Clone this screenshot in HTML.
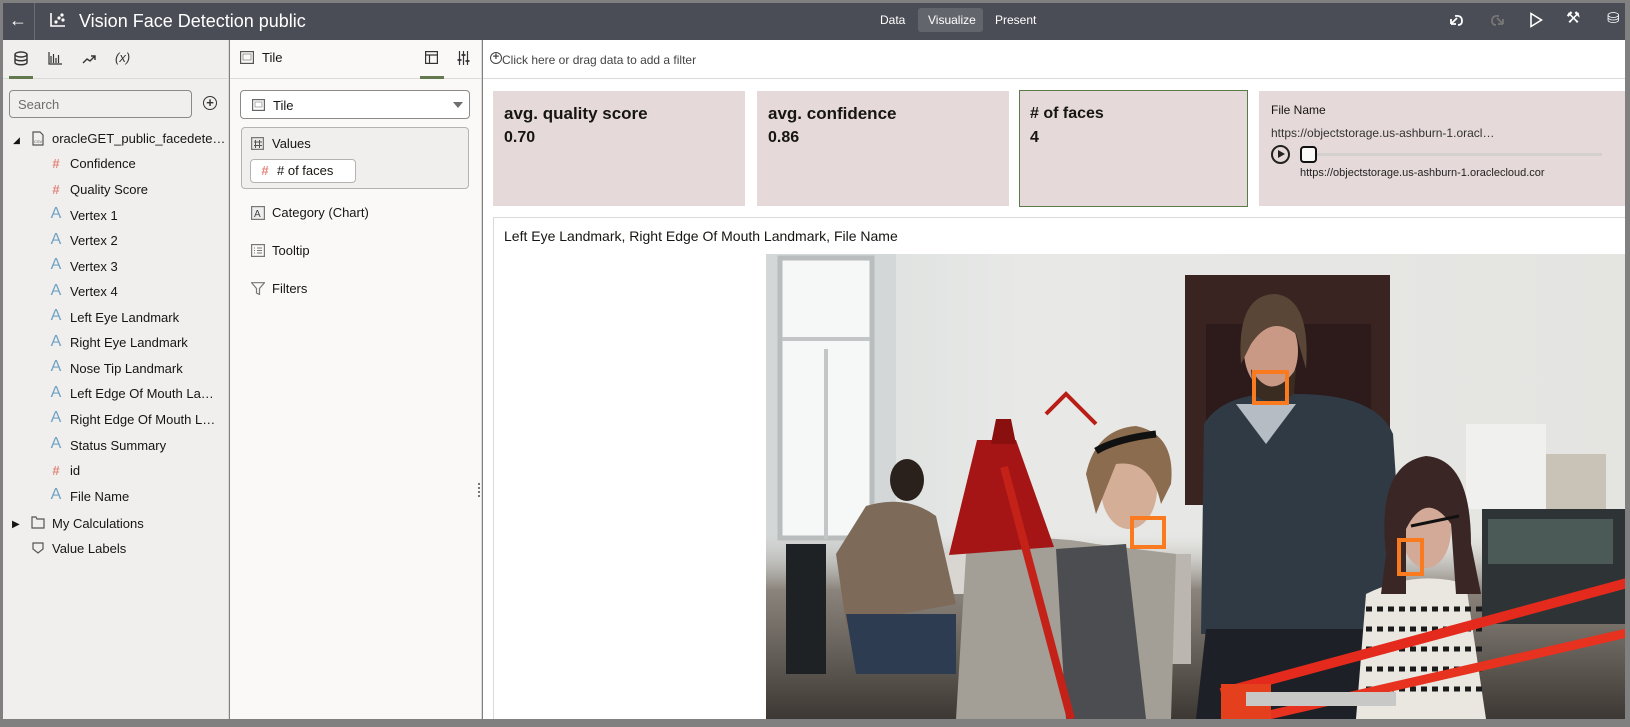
<!DOCTYPE html>
<html><head><meta charset="utf-8"><style>
*{box-sizing:border-box;margin:0;padding:0}
body{width:1630px;height:727px;overflow:hidden;background:#808080;font-family:"Liberation Sans",sans-serif;color:#161513;position:relative}
.a{position:absolute}
.t{position:absolute;white-space:nowrap;font-size:13px;line-height:16px}
.top{left:3px;top:3px;width:1622px;height:37px;background:#4a4d55}
.ic{position:absolute;font-size:13px;font-weight:bold;line-height:14px;width:14px;text-align:center}
.h{color:#e0877c}.A{color:#6fa2c4;font-weight:normal;font-size:16px}
</style></head><body>
<div class="a top"></div>
<div class="a" style="left:34px;top:3px;width:1px;height:37px;background:#6a6d74"></div>
<div class="t" style="left:9px;top:12px;color:#fff;font-size:18px">&#8592;</div>
<svg class="a" style="left:50px;top:12px" width="16" height="15" viewBox="0 0 16 15"><path d="M1 1v13h14" stroke="#fff" stroke-width="1.6" fill="none"/><circle cx="6" cy="10" r="1.6" fill="#fff"/><circle cx="9" cy="6" r="1.6" fill="#fff"/><circle cx="13" cy="8" r="1.6" fill="#fff"/><circle cx="12" cy="3" r="1.6" fill="#fff"/></svg>
<div class="t" style="left:79px;top:10px;color:#fff;font-size:18px;line-height:22px">Vision Face Detection public</div>
<div class="t" style="left:880px;top:12px;color:#fff;font-size:12px">Data</div>
<div class="a" style="left:918px;top:8px;width:65px;height:24px;background:#62656c;border-radius:3px"></div>
<div class="t" style="left:928px;top:12px;color:#fff;font-size:12px">Visualize</div>
<div class="t" style="left:995px;top:12px;color:#fff;font-size:12px">Present</div>
<svg class="a" style="left:1448px;top:13px" width="16" height="14"><path d="M3 11 L9 5 M3 11V6 M3 11H8" stroke="#fff" stroke-width="1.8" fill="none"/><path d="M7 3 Q14 2 14 8 Q14 12 10 12" stroke="#fff" stroke-width="1.8" fill="none"/></svg>
<svg class="a" style="left:1490px;top:13px" width="16" height="14"><path d="M13 11 L7 5 M13 11V6 M13 11H8" stroke="#777" stroke-width="1.8" fill="none"/><path d="M9 3 Q2 2 2 8 Q2 12 6 12" stroke="#777" stroke-width="1.8" fill="none"/></svg>
<svg class="a" style="left:1529px;top:12px" width="14" height="16"><path d="M2 1.5L12.5 8 2 14.5z" stroke="#fff" stroke-width="1.6" fill="none"/></svg>
<div class="t" style="left:1566px;top:11px;color:#fff;font-size:16px">&#9874;</div>
<div class="t" style="left:1607px;top:11px;color:#fff;font-size:15px">&#9921;</div>

<!-- left panel -->
<div class="a" style="left:3px;top:40px;width:226px;height:679px;background:#f1efed;border-right:1px solid #dcdad8"></div>
<div class="a" style="left:3px;top:78px;width:226px;height:1px;background:#dcdad8"></div>
<svg class="a" style="left:14px;top:51px" width="14" height="15"><ellipse cx="7" cy="3.5" rx="6" ry="2.5" stroke="#333" stroke-width="1.4" fill="none"/><path d="M1 3.5v8c0 3 12 3 12 0v-8M1 7.5c0 3 12 3 12 0" stroke="#333" stroke-width="1.4" fill="none"/></svg>
<div class="a" style="left:9px;top:76px;width:24px;height:3px;background:#627a4d"></div>
<svg class="a" style="left:48px;top:52px" width="14" height="13"><path d="M1 0v12h13M3 11V4M5.5 11V2M8 11V6M10.5 11V3" stroke="#333" stroke-width="1.2" fill="none"/></svg>
<svg class="a" style="left:82px;top:54px" width="14" height="10"><path d="M1 9l4-4 3 2 5-5M9 2h4v4" stroke="#333" stroke-width="1.4" fill="none"/></svg>
<div class="t" style="left:115px;top:50px;font-style:italic;color:#333">(x)</div>
<div class="a" style="left:9px;top:90px;width:183px;height:28px;border:1px solid #8b8a88;border-radius:4px;background:#f1efed"></div>
<div class="t" style="left:18px;top:97px;color:#6f6e6c">Search</div>
<div class="a" style="left:203px;top:96px;width:14px;height:14px;border:1.5px solid #333;border-radius:50%"></div>
<div class="t" style="left:205px;top:95px;font-size:13px;font-weight:bold;color:#333;width:10px;text-align:center">+</div>
<div class="t" style="left:13px;top:132px;font-size:9px">&#9698;</div>
<svg class="a" style="left:32px;top:131px" width="12" height="15"><path d="M1 1h7l3 3v10H1z" stroke="#555" stroke-width="1.2" fill="none"/><text x="2" y="12" font-size="4" fill="#555" font-family="Liberation Sans">CSV</text></svg>
<div class="t" style="left:52px;top:131px">oracleGET_public_facedete…</div>

<div class="ic h" style="left:49px;top:157px">#</div><div class="t" style="left:70px;top:156px">Confidence</div>
<div class="ic h" style="left:49px;top:183px">#</div><div class="t" style="left:70px;top:182px">Quality Score</div>
<div class="ic A" style="left:49px;top:207px">A</div><div class="t" style="left:70px;top:208px">Vertex 1</div>
<div class="ic A" style="left:49px;top:233px">A</div><div class="t" style="left:70px;top:233px">Vertex 2</div>
<div class="ic A" style="left:49px;top:258px">A</div><div class="t" style="left:70px;top:259px">Vertex 3</div>
<div class="ic A" style="left:49px;top:284px">A</div><div class="t" style="left:70px;top:284px">Vertex 4</div>
<div class="ic A" style="left:49px;top:309px">A</div><div class="t" style="left:70px;top:310px">Left Eye Landmark</div>
<div class="ic A" style="left:49px;top:335px">A</div><div class="t" style="left:70px;top:335px">Right Eye Landmark</div>
<div class="ic A" style="left:49px;top:360px">A</div><div class="t" style="left:70px;top:361px">Nose Tip Landmark</div>
<div class="ic A" style="left:49px;top:386px">A</div><div class="t" style="left:70px;top:386px">Left Edge Of Mouth La…</div>
<div class="ic A" style="left:49px;top:411px">A</div><div class="t" style="left:70px;top:412px">Right Edge Of Mouth L…</div>
<div class="ic A" style="left:49px;top:437px">A</div><div class="t" style="left:70px;top:438px">Status Summary</div>
<div class="ic h" style="left:49px;top:464px">#</div><div class="t" style="left:70px;top:463px">id</div>
<div class="ic A" style="left:49px;top:488px">A</div><div class="t" style="left:70px;top:489px">File Name</div>
<div class="t" style="left:12px;top:517px;font-size:10px">&#9654;</div>
<svg class="a" style="left:31px;top:516px" width="14" height="13"><path d="M1 1h4l1 2h7v9H1z" stroke="#555" stroke-width="1.2" fill="none"/></svg>
<div class="t" style="left:52px;top:516px">My Calculations</div>
<svg class="a" style="left:31px;top:541px" width="14" height="14"><path d="M2 2h6l4 5-4 5H2z" stroke="#555" stroke-width="1.2" fill="none" transform="rotate(90 7 7)"/></svg>
<div class="t" style="left:52px;top:541px">Value Labels</div>

<!-- middle panel -->
<div class="a" style="left:230px;top:40px;width:252px;height:679px;background:#fbf9f8;border-right:1px solid #dcdad8"></div>
<div class="a" style="left:230px;top:78px;width:252px;height:1px;background:#dcdad8"></div>
<svg class="a" style="left:240px;top:51px" width="14" height="13"><rect x="0.6" y="0.6" width="12.8" height="11.8" stroke="#555" fill="none" stroke-width="1.2"/><rect x="3" y="3" width="8" height="6" stroke="#888" fill="none" stroke-width="0.8"/></svg>
<div class="t" style="left:262px;top:50px">Tile</div>
<svg class="a" style="left:425px;top:51px" width="13" height="13"><rect x="0.6" y="0.6" width="11.8" height="11.8" stroke="#333" fill="none" stroke-width="1.2"/><path d="M0.6 4h12M4.5 4v9" stroke="#333" stroke-width="1.2"/></svg>
<div class="a" style="left:420px;top:76px;width:24px;height:3px;background:#627a4d"></div>
<svg class="a" style="left:457px;top:51px" width="13" height="14"><path d="M2.5 0v14M6.5 0v14M10.5 0v14" stroke="#333" stroke-width="1.2"/><path d="M0.5 9h4M4.5 4h4M8.5 10h4" stroke="#333" stroke-width="1.8"/></svg>
<div class="a" style="left:240px;top:90px;width:230px;height:29px;border:1px solid #8b8a88;border-radius:4px;background:#fff"></div>
<svg class="a" style="left:252px;top:99px" width="13" height="12"><rect x="0.6" y="0.6" width="11.8" height="10.8" stroke="#666" fill="none" stroke-width="1.2"/><rect x="3" y="3" width="7" height="5" stroke="#999" fill="none" stroke-width="0.8"/></svg>
<div class="t" style="left:273px;top:98px">Tile</div>
<div class="a" style="left:453px;top:102px;width:0;height:0;border-left:5px solid transparent;border-right:5px solid transparent;border-top:6px solid #6f6e6c"></div>
<div class="a" style="left:241px;top:127px;width:228px;height:62px;border:1px solid #b5b3b1;border-radius:4px;background:#f1efed"></div>
<svg class="a" style="left:251px;top:137px" width="13" height="13"><rect x="0.6" y="0.6" width="11.8" height="11.8" stroke="#777" fill="#e8e6e4" stroke-width="1.2"/><path d="M4.5 3v8M8.5 3v8M3 5h8M3 8.5h8" stroke="#555" stroke-width="1"/></svg>
<div class="t" style="left:272px;top:136px">Values</div>
<div class="a" style="left:250px;top:159px;width:106px;height:24px;border:1px solid #b5b3b1;border-radius:4px;background:#fff"></div>
<div class="ic h" style="left:258px;top:164px">#</div>
<div class="t" style="left:277px;top:163px">#&nbsp;of faces</div>
<svg class="a" style="left:251px;top:206px" width="14" height="14"><rect x="0.6" y="0.6" width="12.8" height="12.8" stroke="#777" fill="#eee" stroke-width="1.2"/><text x="3" y="11" font-size="10" fill="#444" font-family="Liberation Sans">A</text></svg>
<div class="t" style="left:272px;top:205px">Category (Chart)</div>
<svg class="a" style="left:251px;top:244px" width="14" height="13"><rect x="0.6" y="0.6" width="12.8" height="11.8" stroke="#777" fill="none" stroke-width="1.2"/><path d="M3 4h1M6 4h5M3 6.5h1M6 6.5h5M3 9h1M6 9h5" stroke="#777"/></svg>
<div class="t" style="left:272px;top:243px">Tooltip</div>
<svg class="a" style="left:251px;top:282px" width="14" height="13"><path d="M0.5 0.7h13L8.5 6.5V12.5L5.5 11V6.5z" stroke="#777" fill="none" stroke-width="1.2"/></svg>
<div class="t" style="left:272px;top:281px">Filters</div>
<div class="a" style="left:478px;top:483px;width:2px;height:14px;border-left:2px dotted #777"></div>

<!-- canvas -->
<div class="a" style="left:483px;top:40px;width:1142px;height:679px;background:#fff"></div>
<div class="a" style="left:483px;top:78px;width:1142px;height:1px;background:#dcdad8"></div>
<div class="a" style="left:490px;top:52px;width:12px;height:12px;border:1.2px solid #444;border-radius:50%"></div>
<div class="t" style="left:491px;top:51px;font-size:11px;font-weight:bold;width:10px;text-align:center;line-height:13px;color:#444">+</div>
<div class="t" style="left:502px;top:52px;font-size:12px;color:#444">Click here or drag data to add a filter</div>

<div class="a" style="left:493px;top:91px;width:252px;height:115px;background:#e5dad9"></div>
<div class="t" style="left:504px;top:104px;font-size:17px;font-weight:bold;line-height:20px">avg. quality score</div>
<div class="t" style="left:504px;top:129px;font-size:16px;font-weight:bold;line-height:18px">0.70</div>
<div class="a" style="left:757px;top:91px;width:252px;height:115px;background:#e5dad9"></div>
<div class="t" style="left:768px;top:104px;font-size:17px;font-weight:bold;line-height:20px">avg. confidence</div>
<div class="t" style="left:768px;top:129px;font-size:16px;font-weight:bold;line-height:18px">0.86</div>
<div class="a" style="left:1019px;top:90px;width:229px;height:117px;background:#e5dad9;border:1px solid #5b7a4a"></div>
<div class="t" style="left:1030px;top:104px;font-size:16px;font-weight:bold;line-height:20px"># of faces</div>
<div class="t" style="left:1030px;top:129px;font-size:16px;font-weight:bold;line-height:18px">4</div>
<div class="a" style="left:1259px;top:91px;width:366px;height:115px;background:#e5dad9"></div>
<div class="t" style="left:1271px;top:102px;font-size:12px">File Name</div>
<div class="t" style="left:1271px;top:125px;font-size:12px;color:#333">https://objectstorage.us-ashburn-1.oracl…</div>
<div class="a" style="left:1271px;top:145px;width:19px;height:19px;border:2px solid #222;border-radius:50%"></div>
<div class="a" style="left:1278px;top:150px;width:0;height:0;border-top:4.5px solid transparent;border-bottom:4.5px solid transparent;border-left:7px solid #222"></div>
<div class="a" style="left:1316px;top:153px;width:286px;height:3px;background:#d3d0cd"></div>
<div class="a" style="left:1300px;top:146px;width:17px;height:17px;border:2.5px solid #111;border-radius:4px;background:#fbf9f8"></div>
<div class="t" style="left:1300px;top:165px;font-size:11px;color:#222">https://objectstorage.us-ashburn-1.oraclecloud.cor</div>

<div class="a" style="left:493px;top:217px;width:1132px;height:502px;border:1px solid #dcdad8;border-right:none;border-bottom:none"></div>
<div class="t" style="left:504px;top:228px;font-size:14px;line-height:17px">Left Eye Landmark, Right Edge Of Mouth Landmark, File Name</div>

<svg class="a" style="left:766px;top:254px" width="859" height="465" viewBox="0 0 859 465">
<defs>
<linearGradient id="wall" x1="0" x2="1"><stop offset="0" stop-color="#d8dcdc"/><stop offset="0.3" stop-color="#e8e9e7"/><stop offset="1" stop-color="#e4e4e1"/></linearGradient>
<linearGradient id="flr" x1="0" y1="0" x2="0" y2="1"><stop offset="0" stop-color="#c9c6c0" stop-opacity="0"/><stop offset="0.3" stop-color="#8a847c"/><stop offset="1" stop-color="#3e3834"/></linearGradient>
</defs>
<rect width="859" height="465" fill="url(#wall)"/>
<rect x="0" y="0" width="130" height="465" fill="#d3d7d7"/>
<rect x="14" y="4" width="92" height="280" fill="#f6f8f8" stroke="#b9bdbd" stroke-width="5"/>
<path d="M16 85h88M60 95v190" stroke="#c2c6c6" stroke-width="4"/>
<rect x="419" y="21" width="205" height="230" fill="#3a2422"/>
<rect x="440" y="70" width="165" height="180" fill="#2c1b1a"/>
<rect x="0" y="280" width="859" height="185" fill="url(#flr)"/>
<rect x="716" y="255" width="143" height="115" fill="#2e3436"/>
<rect x="722" y="265" width="125" height="45" fill="#4b5a56"/>
<rect x="700" y="170" width="80" height="85" fill="#f0f0ee"/>
<rect x="780" y="200" width="60" height="55" fill="#c9c2b6"/>
<rect x="80" y="300" width="200" height="40" fill="#d9d6d1"/>
<rect x="20" y="290" width="40" height="130" fill="#1e2224"/>
<ellipse cx="141" cy="226" rx="17" ry="21" fill="#2a211d"/>
<path d="M100 252 Q140 240 170 262 L190 350 L80 370 L70 300z" fill="#7e6a58"/>
<path d="M80 360h110v60H90z" fill="#2e3c52"/>
<rect x="330" y="300" width="95" height="110" fill="#bbb6b0"/>
<path d="M438 170 Q460 135 530 140 Q610 140 627 180 L640 380 L435 380z" fill="#303a45"/>
<path d="M470 150 L500 190 L530 150z" fill="#b6bcc4"/>
<path d="M440 375h190v90H430z" fill="#1d2026"/>
<ellipse cx="505" cy="97" rx="27" ry="40" fill="#c99985"/>
<path d="M475 110 Q470 40 510 40 Q545 45 540 115 L530 80 Q505 60 485 90z" fill="#5a4636"/>
<path d="M485 115 Q505 150 530 115 L528 140 Q505 155 487 140z" fill="#3b2c22"/>
<path d="M200 300 Q250 275 330 290 L410 300 L405 465 L190 465z" fill="#a39e96"/>
<path d="M290 295 L360 290 L380 465 L300 465z" fill="#4b4d50"/>
<ellipse cx="363" cy="235" rx="28" ry="40" fill="#d5ae98"/>
<path d="M320 220 Q330 175 370 172 Q410 180 405 230 L395 250 Q385 205 350 210 L330 260z" fill="#8c6c4e"/>
<path d="M330 197 Q350 185 390 180" stroke="#111" stroke-width="7" fill="none"/>
<path d="M600 340 Q650 315 700 330 L720 465 L590 465z" fill="#eae6e0"/>
<path d="M600 355 L720 355 M600 375 L720 375 M600 395 L720 395 M600 415 L720 415 M600 435 L720 435" stroke="#1b1b1b" stroke-width="5" stroke-dasharray="6 5"/>
<ellipse cx="660" cy="276" rx="25" ry="38" fill="#d3a997"/>
<path d="M620 300 Q610 210 660 202 Q705 205 705 290 L715 340 L690 340 L685 270 Q660 235 640 275 L640 340 L615 340z" fill="#3a2624"/>
<path d="M645 272 L693 262" stroke="#111" stroke-width="3"/>
<path d="M211 186 L250 186 L288 293 L183 301z" fill="#a51515"/>
<path d="M230 165 L245 165 L250 190 L225 190z" fill="#8a1010"/>
<path d="M238 213 L305 465" stroke="#c42218" stroke-width="8"/>
<path d="M455 439 L861 329" stroke="#e32a1c" stroke-width="10"/>
<path d="M494 463 L861 379" stroke="#e6321f" stroke-width="9"/>
<rect x="455" y="430" width="50" height="35" fill="#e4401e"/>
<rect x="480" y="438" width="150" height="14" fill="#c8c8c6"/>
<path d="M280 160 L300 140 L330 170" stroke="#b81d16" stroke-width="4" fill="none"/>
<rect x="488" y="118" width="33" height="31" fill="none" stroke="#f97a1f" stroke-width="4"/>
<rect x="366" y="264" width="32" height="29" fill="none" stroke="#f97a1f" stroke-width="4"/>
<rect x="633" y="286" width="23" height="34" fill="none" stroke="#f97a1f" stroke-width="4"/>
</svg>
</body></html>
